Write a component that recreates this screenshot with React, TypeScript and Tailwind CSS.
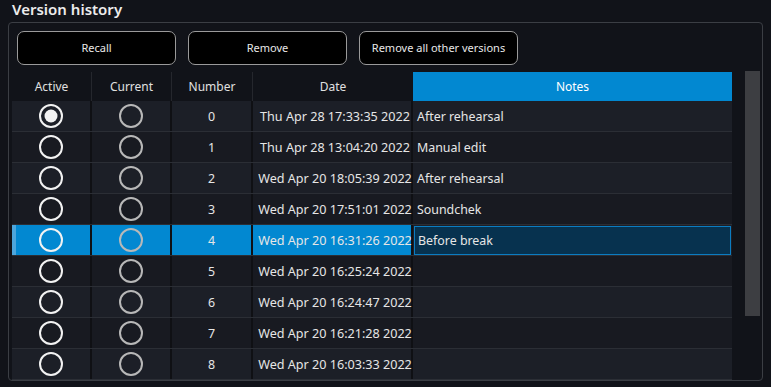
import React from "react";

const rows = [
  { n: 0, d: "Thu Apr 28 17:33:35 2022", note: "After rehearsal" },
  { n: 1, d: "Thu Apr 28 13:04:20 2022", note: "Manual edit" },
  { n: 2, d: "Wed Apr 20 18:05:39 2022", note: "After rehearsal" },
  { n: 3, d: "Wed Apr 20 17:51:01 2022", note: "Soundchek" },
  { n: 4, d: "Wed Apr 20 16:31:26 2022", note: "Before break" },
  { n: 5, d: "Wed Apr 20 16:25:24 2022", note: "" },
  { n: 6, d: "Wed Apr 20 16:24:47 2022", note: "" },
  { n: 7, d: "Wed Apr 20 16:21:28 2022", note: "" },
  { n: 8, d: "Wed Apr 20 16:03:33 2022", note: "" },
];

function Radio({ on, color }: { on?: boolean; color: string }) {
  return (
    <svg width="26" height="26" viewBox="0 0 26 26">
      <circle cx="13" cy="13" r="11" fill="none" stroke={color} strokeWidth="2" />
      {on && <circle cx="13" cy="13" r="6.5" fill={color} />}
    </svg>
  );
}

export default function App() {
  return (
    <div
      className="w-[771px] h-[387px] bg-[#111319] text-[#e6e6e6] overflow-hidden relative"
      style={{ fontFamily: "'Noto Sans', 'Open Sans', sans-serif" }}
    >
      <div className="pl-[12px] h-[22px] text-[15px] leading-[22px] font-semibold text-[#ececec] -mt-[2px]">
        Version history
      </div>
      <div className="ml-[8px] mt-[2px] w-[755px] h-[359px] border border-[#3b3e44] rounded-[4px] pl-[3px] pt-[8px]">
        <div className="flex gap-[12px] pl-[5px]">
          {["Recall", "Remove", "Remove all other versions"].map((t) => (
            <div
              key={t}
              className="w-[159px] h-[34px] bg-black border-[1.5px] border-[#9a9a9a] rounded-[7px] flex items-center justify-center text-[11px] text-[#e8e8e8]"
            >
              {t}
            </div>
          ))}
        </div>
        <div className="flex mt-[6px]">
          <div className="w-[720px]">
            <div className="flex h-[30px] text-[12px] text-[#e0e0e0] bg-[#111319] pt-[1px]">
              <div className="w-[80px] flex items-center justify-center border-r border-[#25272d]">Active</div>
              <div className="w-[80px] flex items-center justify-center border-r border-[#25272d]">Current</div>
              <div className="w-[81px] flex items-center justify-center border-r border-[#25272d]">Number</div>
              <div className="w-[160px] flex items-center justify-center">Date</div>
              <div className="w-[319px] flex items-center justify-center bg-[#0288d1] text-white">Notes</div>
            </div>
            {rows.map((r, i) => {
              const sel = r.n === 4;
              const bg = i % 2 === 0 ? "bg-[#1c1f27]" : "bg-[#181a21]";
              const cell = sel ? "bg-[#0288d1]" : bg;
              return (
                <div key={r.n} className={`flex h-[31px] border-b border-[#2b2e35] text-[12.4px] ${bg}`}>
                  <div className={`w-[80px] flex items-center justify-center border-r-2 border-[#0f1014] relative ${cell}`}>
                    {sel && <div className="absolute left-0 top-0 bottom-0 w-[4px] bg-[#4da6dc]" />}
                    <Radio on={r.n === 0} color="#f2f2f2" />
                  </div>
                  <div className={`w-[80px] flex items-center justify-center border-r-2 border-[#0f1014] ${cell}`}>
                    <Radio color="#b8b8b8" />
                  </div>
                  <div className={`w-[81px] flex items-center justify-center pt-[3px] border-r-2 border-[#0f1014] ${cell}`}>
                    {r.n}
                  </div>
                  <div className={`w-[160px] flex items-center justify-center pl-[6px] pt-[3px] border-r-2 border-[#0f1014] whitespace-nowrap text-[12.6px] ${cell}`}>
                    {r.d}
                  </div>
                  <div className="w-[319px] flex items-center">
                    {sel ? (
                      <div className="ml-[1px] w-[317px] h-[29px] bg-[#07324f] border border-[#0b7cc1] flex items-center pl-[3px] pt-[2px]">
                        {r.note}
                      </div>
                    ) : (
                      <div className="pl-[4px] pt-[3px]">{r.note}</div>
                    )}
                  </div>
                </div>
              );
            })}
          </div>
          <div className="ml-[13px] w-[15px] h-[245px] bg-[#3d3e42]" />
        </div>
      </div>
    </div>
  );
}
